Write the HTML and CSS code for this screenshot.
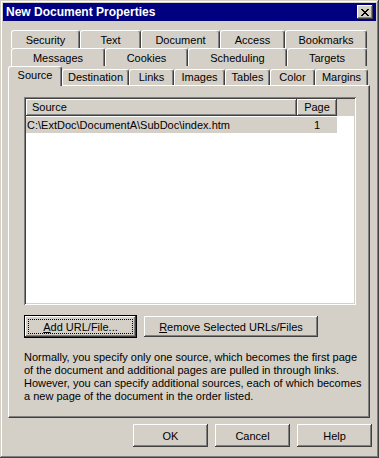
FILE: index.html
```html
<!DOCTYPE html>
<html>
  <head>
    <title>New Document Properties</title>
    <link rel="stylesheet" href="styles.css">
  </head>
  <body>
    <div class="window">
      <div class="titlebar">
        <span class="title">New Document Properties</span>
        <div class="close">
          <svg width="8" height="7" viewBox="0 0 8 7">
            <path d="M0 0h2v1h-2zM6 0h2v1h-2zM1 1h2v1h-2zM5 1h2v1h-2zM2 2h4v1h-4zM3 3h2v1h-2zM2 4h4v1h-4zM1 5h2v1h-2zM5 5h2v1h-2zM0 6h2v1h-2zM6 6h2v1h-2z" fill="#000"/>
          </svg>
        </div>
      </div>

      <div class="tabs">
        <div class="tab-row row-a">
          <div class="tab">Security</div>
          <div class="tab">Text</div>
          <div class="tab">Document</div>
          <div class="tab">Access</div>
          <div class="tab">Bookmarks</div>
        </div>
        <div class="tab-row row-b">
          <div class="tab">Messages</div>
          <div class="tab">Cookies</div>
          <div class="tab">Scheduling</div>
          <div class="tab">Targets</div>
        </div>
        <div class="tab-row front">
          <div class="tab selected">Source</div>
          <div class="tab">Destination</div>
          <div class="tab">Links</div>
          <div class="tab">Images</div>
          <div class="tab">Tables</div>
          <div class="tab">Color</div>
          <div class="tab">Margins</div>
        </div>
      </div>

      <div class="panel">
        <div class="listbox">
          <div class="lv-header">
            <div class="col col-source">Source</div>
            <div class="col col-page">Page</div>
            <div class="col-fill"></div>
          </div>
          <div class="lv-row">
            <span class="cell-source">C:\ExtDoc\DocumentA\SubDoc\index.htm</span>
            <span class="cell-page">1</span>
          </div>
        </div>

        <div class="btn-row">
          <div class="btn default btn-add"><span class="focus"><u>A</u>dd URL/File...</span></div>
          <div class="btn btn-remove"><u>R</u>emove Selected URLs/Files</div>
        </div>

        <p class="note">
          Normally, you specify only one source, which becomes the first page<br>
          of the document and additional pages are pulled in through links.<br>
          However, you can specify additional sources, each of which becomes<br>
          a new page of the document in the order listed.
        </p>
      </div>

      <div class="dialog-buttons">
        <div class="btn">OK</div>
        <div class="btn">Cancel</div>
        <div class="btn">Help</div>
      </div>
    </div>
  </body>
</html>
```

FILE: styles.css
```css
html {
  font-family: "Liberation Sans", Arial, sans-serif;
  font-size: 11px;
}

body {
  margin: 0;
  background: #d4d0c8;
}

.window {
  box-sizing: border-box;
  width: 379px;
  height: 458px;
  padding: 3px;
  background: #d4d0c8;
  color: #000;
  box-shadow: inset -1px -1px #404040, inset 1px 1px #d4d0c8,
    inset -2px -2px #808080, inset 2px 2px #fff;
}

.titlebar {
  display: flex;
  align-items: center;
  justify-content: space-between;
  height: 18px;
  padding: 0 3px 0 3px;
  background: #000080;
}

.title {
  color: #fff;
  font-weight: bold;
  font-size: 12px;
}

.close {
  display: flex;
  align-items: center;
  justify-content: center;
  width: 16px;
  height: 14px;
  background: #d4d0c8;
  box-shadow: inset -1px -1px #404040, inset 1px 1px #fff,
    inset -2px -2px #808080, inset 2px 2px #d4d0c8;
}

/* tab strip */
.tabs {
  margin: 9px 0 0 5px;
  width: 362px;
}

.tab-row {
  display: flex;
  height: 18px;
  padding: 0 3px;
}

.tab-row.front {
  height: 19px;
  padding: 0 2px;
  align-items: flex-start;
}

.tab {
  box-sizing: border-box;
  flex: none;
  height: 18px;
  padding-top: 3px;
  text-align: center;
  white-space: nowrap;
  background: #d4d0c8;
  border: 1px solid;
  border-color: #fff #404040 transparent #fff;
  border-bottom: none;
  border-radius: 3px 3px 0 0;
  box-shadow: inset -1px 0 #808080;
}

.row-a .tab:nth-child(1) { width: 69px; }
.row-a .tab:nth-child(2) { width: 61px; }
.row-a .tab:nth-child(3) { width: 79px; }
.row-a .tab:nth-child(4) { width: 65px; }
.row-a .tab:nth-child(5) { width: 82px; }

.row-b .tab:nth-child(1) { width: 94px; }
.row-b .tab:nth-child(2) { width: 83px; }
.row-b .tab:nth-child(3) { width: 99px; }
.row-b .tab:nth-child(4) { width: 80px; }

.front .tab:nth-child(1) { width: 54px; }
.front .tab:nth-child(2) { width: 67px; }
.front .tab:nth-child(3) { width: 45px; }
.front .tab:nth-child(4) { width: 51px; }
.front .tab:nth-child(5) { width: 45px; }
.front .tab:nth-child(6) { width: 45px; }
.front .tab:nth-child(7) { width: 53px; }

.front .tab {
  margin-top: 3px;
  height: 16px;
  padding-top: 1px;
}

.front .tab.selected {
  position: relative;
  z-index: 1;
  margin: 0 0 0 -2px;
  height: 20px;
  padding-top: 2px;
}

/* page */
.panel {
  box-sizing: border-box;
  margin-left: 5px;
  width: 362px;
  height: 333px;
  padding: 11px 15px 0;
  border: 1px solid;
  border-color: #fff #404040 #404040 #fff;
  box-shadow: inset -1px -1px #808080;
}

.listbox {
  box-sizing: border-box;
  width: 332px;
  height: 208px;
  padding: 2px;
  background: #fff;
  box-shadow: inset 1px 1px #808080, inset -1px -1px #fff,
    inset 2px 2px #404040, inset -2px -2px #d4d0c8;
}

.lv-header {
  display: flex;
  height: 17px;
  background: #d4d0c8;
}

.col {
  box-sizing: border-box;
  height: 17px;
  line-height: 16px;
  box-shadow: inset -1px -1px #404040, inset 1px 1px #fff,
    inset -2px -2px #808080;
}

.col-source {
  width: 271px;
  padding-left: 6px;
}

.col-page {
  width: 40px;
  text-align: center;
}

.col-fill {
  flex: 1;
}

.lv-row {
  display: flex;
  width: 311px;
  height: 16px;
  margin-top: 1px;
  line-height: 16px;
  background: #d4d0c8;
}

.cell-source {
  width: 271px;
  padding-left: 1px;
  white-space: nowrap;
}

.cell-page {
  width: 40px;
  text-align: center;
}

/* buttons */
.btn {
  box-sizing: border-box;
  display: flex;
  align-items: center;
  justify-content: center;
  width: 75px;
  height: 23px;
  background: #d4d0c8;
  white-space: nowrap;
  box-shadow: inset -1px -1px #404040, inset 1px 1px #fff,
    inset -2px -2px #808080, inset 2px 2px #d4d0c8;
}

.btn.default {
  border: 1px solid #000;
}

.focus {
  box-sizing: border-box;
  display: flex;
  align-items: center;
  justify-content: center;
  width: calc(100% - 6px);
  height: calc(100% - 6px);
  border: 1px dotted #000;
}

.btn-row {
  display: flex;
  align-items: center;
  gap: 7px;
  margin-top: 10px;
}

.btn-add {
  width: 113px;
  height: 23px;
}

.btn-remove {
  width: 174px;
  height: 21px;
}

.note {
  margin: 13px 0 0;
  line-height: 13px;
  white-space: nowrap;
}

.dialog-buttons {
  display: flex;
  justify-content: flex-end;
  gap: 7px;
  margin: 6px 4px 0 0;
}
```
